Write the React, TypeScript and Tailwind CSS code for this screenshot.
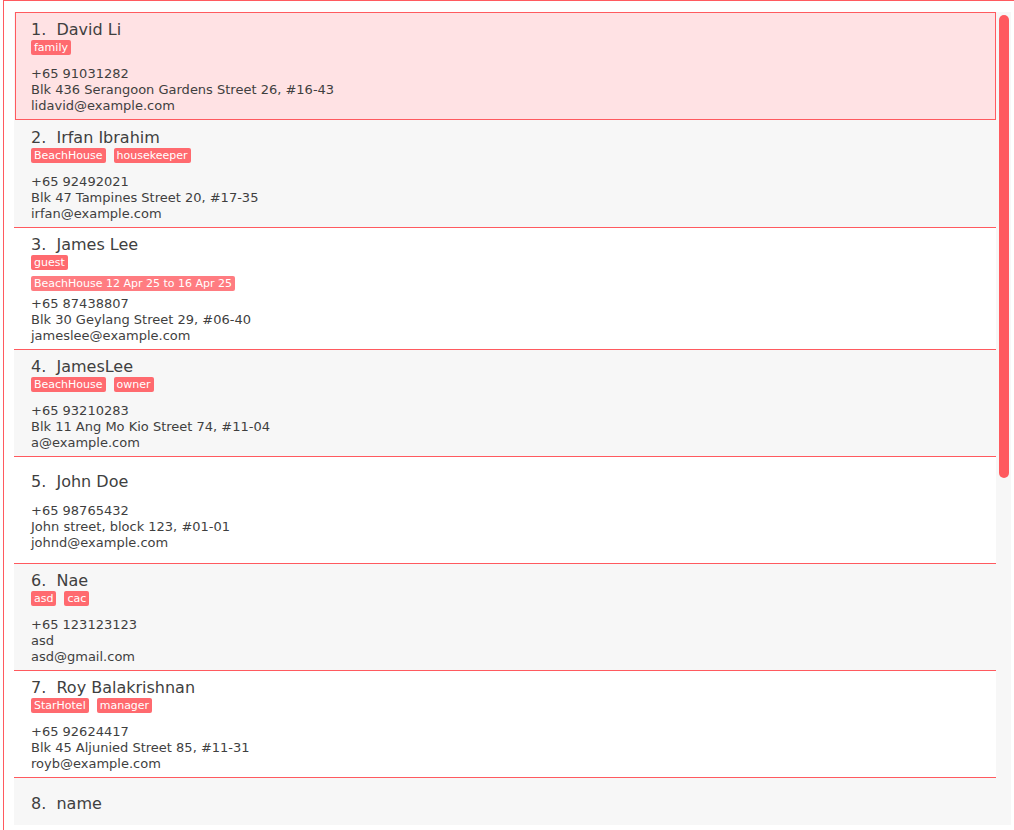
import React from "react";

type Person = {
  name: string;
  tags: string[];
  booking?: string;
  phone?: string;
  address?: string;
  email?: string;
};

const people: Person[] = [
  { name: "David Li", tags: ["family"], phone: "+65 91031282", address: "Blk 436 Serangoon Gardens Street 26, #16-43", email: "lidavid@example.com" },
  { name: "Irfan Ibrahim", tags: ["BeachHouse", "housekeeper"], phone: "+65 92492021", address: "Blk 47 Tampines Street 20, #17-35", email: "irfan@example.com" },
  { name: "James Lee", tags: ["guest"], booking: "BeachHouse 12 Apr 25 to 16 Apr 25", phone: "+65 87438807", address: "Blk 30 Geylang Street 29, #06-40", email: "jameslee@example.com" },
  { name: "JamesLee", tags: ["BeachHouse", "owner"], phone: "+65 93210283", address: "Blk 11 Ang Mo Kio Street 74, #11-04", email: "a@example.com" },
  { name: "John Doe", tags: [], phone: "+65 98765432", address: "John street, block 123, #01-01", email: "johnd@example.com" },
  { name: "Nae", tags: ["asd", "cac"], phone: "+65 123123123", address: "asd", email: "asd@gmail.com" },
  { name: "Roy Balakrishnan", tags: ["StarHotel", "manager"], phone: "+65 92624417", address: "Blk 45 Aljunied Street 85, #11-31", email: "royb@example.com" },
];

function Tag({ text, light }: { text: string; light?: boolean }) {
  return (
    <span
      className={`h-[15px] px-[3px] rounded-[2px] text-white text-[11px] leading-[15px] ${
        light ? "bg-[#ff7c81]" : "bg-[#ff6a6f]"
      }`}
    >
      {text}
    </span>
  );
}

function Card({ p, i }: { p: Person; i: number }) {
  const selected = i === 0;
  const bg = i % 2 === 1 ? "bg-[#f7f7f7]" : "bg-white";
  const cls = selected
    ? "ml-px min-h-[107px] border border-[#ff5a5f] bg-[#ffe2e4] pl-[15px] pt-[7px] pb-[5px]"
    : i === 1
    ? `min-h-[108px] border-b border-[#ff5a5f] ${bg} pl-[17px] pt-[8px] pb-[5px]`
    : `min-h-[107px] border-b border-[#ff5a5f] ${bg} pl-[17px] pt-[7px] pb-[5px]`;
  return (
    <div className={`shrink-0 flex flex-col justify-center ${cls}`}>
      <div className="text-[16px] leading-[20px] text-[#3f3f3f] whitespace-pre">
        {`${i + 1}.  ${p.name}`}
      </div>
      {p.tags.length > 0 && (
        <div className="flex gap-[8px] h-[15px]">
          {p.tags.map((t) => (
            <Tag key={t} text={t} />
          ))}
        </div>
      )}
      {p.booking ? (
        <div className="flex pt-[6px] pb-[5px]">
          <Tag text={p.booking} light />
        </div>
      ) : (
        <div className="h-[11px]" />
      )}
      <div className="text-[13px] leading-[16px] text-[#3f3f3f]">
        <div>{p.phone}</div>
        <div>{p.address}</div>
        <div>{p.email}</div>
      </div>
    </div>
  );
}

export default function App() {
  return (
    <div
      className="w-[1014px] h-[830px] bg-white overflow-hidden"
      style={{ fontFamily: '"DejaVu Sans", "Liberation Sans", sans-serif' }}
    >
      <div className="ml-[3px] h-[830px] border-l border-t border-[#ff5a5f] pl-[10px] pt-[11px]">
        <div className="flex w-[997px] h-[813px] bg-[#f7f7f7] overflow-hidden">
          <div className="w-[982px] flex flex-col">
            {people.map((p, i) => (
              <Card key={i} p={p} i={i} />
            ))}
            <div className="shrink-0 bg-[#f7f7f7] pl-[17px] pt-[16px]">
              <div className="text-[16px] leading-[20px] text-[#3f3f3f] whitespace-pre">
                {"8.  name"}
              </div>
            </div>
          </div>
          <div className="w-[15px] pl-[3px] pt-[3px]">
            <div className="w-[10px] h-[463px] rounded-full bg-[#ff5a5f]" />
          </div>
        </div>
      </div>
    </div>
  );
}
